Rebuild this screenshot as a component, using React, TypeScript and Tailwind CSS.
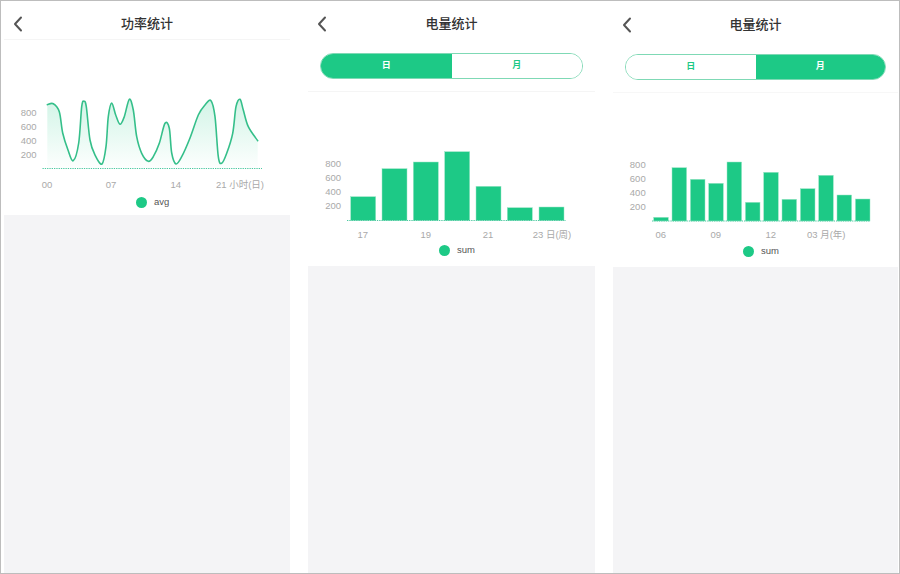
const GREEN = "#1dc986";
const FONT = '"Liberation Sans", "Noto Sans CJK SC", sans-serif';

type Pt = [number, number];

function smooth(points: Pt[]): string {
  let d = `M${points[0][0]} ${points[0][1]}`;
  for (let i = 0; i < points.length - 1; i++) {
    const p0 = points[Math.max(0, i - 1)];
    const p1 = points[i];
    const p2 = points[i + 1];
    const p3 = points[Math.min(points.length - 1, i + 2)];
    const c1x = p1[0] + (p2[0] - p0[0]) / 6;
    const c1y = p1[1] + (p2[1] - p0[1]) / 6;
    const c2x = p2[0] - (p3[0] - p1[0]) / 6;
    const c2y = p2[1] - (p3[1] - p1[1]) / 6;
    d += ` C${c1x.toFixed(2)} ${c1y.toFixed(2)} ${c2x.toFixed(2)} ${c2y.toFixed(2)} ${p2[0]} ${p2[1]}`;
  }
  return d;
}

const LINE: Pt[] = [
  [47.3, 104.7], [53.3, 103.7], [59.3, 111.7], [62.7, 133], [68, 150], [73.3, 160.7], [78.7, 143], [81.7, 106.7],
  [84, 101.3], [86.3, 106.7], [90, 140], [95, 155], [102, 164], [106, 146.7], [108.3, 116.7], [111.7, 103],
  [115.7, 115], [120, 124.3], [124.3, 116.7], [129.3, 99.3], [133.3, 110], [136.7, 136.7], [141.7, 153.3],
  [148.3, 161.3], [153.3, 156.7], [159.3, 143.3], [165, 123.3], [169.3, 128.3], [171.7, 153], [176, 164],
  [181.7, 156.7], [190, 138], [198.3, 115], [205, 105], [211, 100.7], [215, 116.7], [218.3, 156.7], [221.7, 163.3],
  [226.7, 153.3], [232.7, 133.3], [236, 106.7], [240, 99.3], [243.3, 110], [248.3, 126.7], [257.7, 140.7],
];

type Bar = { x: number; w: number; top: number };

function Axis({ x1, x2, y, ticks, labels, right, tickY, labelY }: {
  x1: number; x2: number; y: number; ticks: number[]; right: number; tickY: number;
  labels: { x: number; t: string; anchor?: "middle" | "start" }[]; labelY: number;
}) {
  return (
    <g fontFamily={FONT} fontSize="9.5" fill="#a9a9a9">
      <line x1={x1} x2={x2} y1={y} y2={y} stroke="#4cc9a0" strokeWidth="1" strokeDasharray="1.3 1" />
      {ticks.map((v, i) => (
        <text key={v} x={right} y={tickY + i * 14} textAnchor="end" dominantBaseline="central">{v}</text>
      ))}
      {labels.map((l) => (
        <text key={l.t} x={l.x} y={labelY} textAnchor={l.anchor ?? "middle"} dominantBaseline="central">{l.t}</text>
      ))}
    </g>
  );
}

function Header({ title }: { title: string }) {
  return (
    <div className="relative flex h-[44px] items-center justify-center pt-[1px]">
      <svg className="absolute left-[9px] top-[15px] h-[16px] w-[10px]" viewBox="0 0 10 16" fill="none">
        <path d="M8 1.5 L2 8 L8 14.5" stroke="#555" strokeWidth="2" strokeLinecap="round" strokeLinejoin="round" />
      </svg>
      <span className="text-[13px] font-medium leading-none text-[#333]">{title}</span>
    </div>
  );
}

function Segment({ active }: { active: 0 | 1 }) {
  const on = "bg-[#1dc986] text-white";
  const off = "bg-white text-[#1dc986]";
  return (
    <div className="mx-[12px] flex h-[26px] overflow-hidden rounded-full border border-[#7fd9b5] text-[9px] font-bold">
      <div className={`flex flex-1 items-center justify-center ${active === 0 ? on : off}`}>日</div>
      <div className={`flex flex-1 items-center justify-center ${active === 1 ? on : off}`}>月</div>
    </div>
  );
}

function Legend({ label, offset }: { label: string; offset: number }) {
  return (
    <div className="flex h-[20px] items-center gap-[7px]" style={{ paddingLeft: offset }}>
      <span className="h-[11px] w-[11px] rounded-full bg-[#1dc986]" />
      <span className="text-[9.5px] leading-none text-[#555]">{label}</span>
    </div>
  );
}

function BarChart({ left, w, bars, bottom, top, h }: { left: number; w: number; bars: Bar[]; bottom: number; top: number; h: number }) {
  return (
    <g>
      {bars.map((b) => (
        <rect key={b.x} x={b.x} y={b.top} width={b.w} height={bottom - b.top} fill={GREEN} stroke="#9be5c6" strokeWidth="0.5" />
      ))}
    </g>
  );
}

const WEEK: Bar[] = [
  [350.7, 196.7], [382, 168.7], [413.3, 162], [444.7, 151.7], [476, 186.3], [507.3, 207.7], [539, 207],
].map(([x, top]) => ({ x, top, w: 25 }));

const YEAR: Bar[] = [
  [653.7, 217.3], [672, 167.7], [690.4, 179.3], [708.7, 183.3], [727, 162], [745.4, 202.3], [763.7, 172.3],
  [782, 199.3], [800.4, 188.7], [818.7, 175.3], [837, 195], [855.4, 199],
].map(([x, top]) => ({ x, top, w: 14.6 }));

export default function App() {
  const line = smooth(LINE);
  const area = `${line} L257.7 168 L47.3 168 Z`;
  return (
    <div className="flex h-[574px] w-[900px] gap-[18px] overflow-hidden border border-[#bdbdbd] bg-white pl-[3px]" style={{ fontFamily: FONT }}>
      {/* Power */}
      <div className="flex w-[286px] flex-col">
        <div className="h-[39px] border-b border-[#f5f5f5]">
          <div className="-mb-[5px]"><Header title="功率统计" /></div>
        </div>
        <svg className="block h-[138px] w-[286px] shrink-0" viewBox="4 40 286 138">
          <defs>
            <linearGradient id="fade" x1="0" y1="0" x2="0" y2="1">
              <stop offset="0" stopColor="#1dc986" stopOpacity="0.2" />
              <stop offset="1" stopColor="#1dc986" stopOpacity="0.01" />
            </linearGradient>
          </defs>
          <path d={area} fill="url(#fade)" />
          <path d={line} fill="none" stroke="#35bf8a" strokeWidth="1.6" strokeLinejoin="round" strokeLinecap="round" />
          <Axis
            x1={42.5} x2={262} y={168.5} ticks={[800, 600, 400, 200]} right={36.5} tickY={112.3}
            labels={[]} labelY={183}
          />
        </svg>
        <svg className="block h-[12px] w-[286px] shrink-0" viewBox="4 177 286 12">
          <g fontFamily={FONT} fontSize="9.5" fill="#a9a9a9">
            <text x={47} y={183} textAnchor="middle" dominantBaseline="central">00</text>
            <text x={111} y={183} textAnchor="middle" dominantBaseline="central">07</text>
            <text x={175.7} y={183} textAnchor="middle" dominantBaseline="central">14</text>
            <text x={216} y={183} dominantBaseline="central">21 小时(日)</text>
          </g>
        </svg>
        <div className="h-[25px] shrink-0 pt-[2px]"><Legend label="avg" offset={132} /></div>
        <div className="flex-1 bg-[#f4f4f6]" />
      </div>

      {/* Daily */}
      <div className="flex w-[287px] flex-col">
        <div className="h-[91px] border-b border-[#f5f5f5]">
          <div className="mb-[8px]"><Header title="电量统计" /></div>
          <Segment active={0} />
        </div>
        <svg className="block h-[148px] w-[287px] shrink-0" viewBox="308 92 287 148">
          <BarChart left={308} w={287} bars={WEEK} bottom={220.5} top={92} h={148} />
          <Axis
            x1={347} x2={566} y={220.5} ticks={[800, 600, 400, 200]} right={341} tickY={163.7}
            labelY={234}
            labels={[
              { x: 362.7, t: "17" }, { x: 425.7, t: "19" }, { x: 488, t: "21" },
              { x: 532.7, t: "23 日(周)", anchor: "start" },
            ]}
          />
        </svg>
        <div className="h-[26px] shrink-0"><Legend label="sum" offset={131} /></div>
        <div className="flex-1 bg-[#f4f4f6]" />
      </div>

      {/* Monthly */}
      <div className="flex w-[285px] flex-col">
        <div className="h-[92px] border-b border-[#f7f7f7]">
          <div className="mb-[9px] pt-[1px] -mt-[0px]"><Header title="电量统计" /></div>
          <div className="-mt-[1px]"><Segment active={1} /></div>
        </div>
        <svg className="block h-[148px] w-[285px] shrink-0" viewBox="613 93 285 148">
          <BarChart left={613} w={285} bars={YEAR} bottom={221} top={93} h={148} />
          <Axis
            x1={652} x2={870.5} y={221} ticks={[800, 600, 400, 200]} right={645.7} tickY={164.5}
            labelY={234.7}
            labels={[
              { x: 660.7, t: "06" }, { x: 715.7, t: "09" }, { x: 770.7, t: "12" },
              { x: 807, t: "03 月(年)", anchor: "start" },
            ]}
          />
        </svg>
        <div className="h-[26px] shrink-0"><Legend label="sum" offset={130} /></div>
        <div className="flex-1 bg-[#f4f4f6]" />
      </div>
    </div>
  );
}
